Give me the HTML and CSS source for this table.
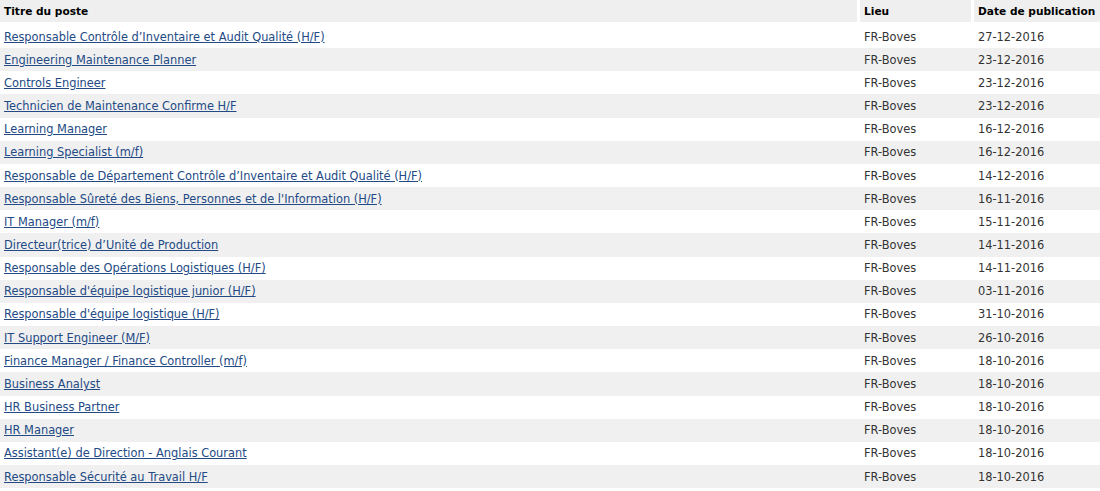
FILE: index.html
```html
<!DOCTYPE html>
<html lang="fr">
<head>
<meta charset="utf-8">
<title>Offres d'emploi</title>
<link rel="stylesheet" href="styles.css">
</head>
<body>
<table class="jobs">
  <colgroup>
    <col class="c-title">
    <col class="c-place">
    <col class="c-date">
  </colgroup>
  <thead>
    <tr>
      <th class="h-title">Titre du poste</th>
      <th class="h-side">Lieu</th>
      <th class="h-side">Date de publication</th>
    </tr>
  </thead>
  <tbody>
    <tr><td class="t"><a href="#">Responsable Contrôle d’Inventaire et Audit Qualité (H/F)</a></td><td class="s">FR-Boves</td><td class="s">27-12-2016</td></tr>
    <tr><td class="t"><a href="#">Engineering Maintenance Planner</a></td><td class="s">FR-Boves</td><td class="s">23-12-2016</td></tr>
    <tr><td class="t"><a href="#">Controls Engineer</a></td><td class="s">FR-Boves</td><td class="s">23-12-2016</td></tr>
    <tr><td class="t"><a href="#">Technicien de Maintenance Confirme H/F</a></td><td class="s">FR-Boves</td><td class="s">23-12-2016</td></tr>
    <tr><td class="t"><a href="#">Learning Manager</a></td><td class="s">FR-Boves</td><td class="s">16-12-2016</td></tr>
    <tr><td class="t"><a href="#">Learning Specialist (m/f)</a></td><td class="s">FR-Boves</td><td class="s">16-12-2016</td></tr>
    <tr><td class="t"><a href="#">Responsable de Département Contrôle d’Inventaire et Audit Qualité (H/F)</a></td><td class="s">FR-Boves</td><td class="s">14-12-2016</td></tr>
    <tr><td class="t"><a href="#">Responsable Sûreté des Biens, Personnes et de l'Information (H/F)</a></td><td class="s">FR-Boves</td><td class="s">16-11-2016</td></tr>
    <tr><td class="t"><a href="#">IT Manager (m/f)</a></td><td class="s">FR-Boves</td><td class="s">15-11-2016</td></tr>
    <tr><td class="t"><a href="#">Directeur(trice) d’Unité de Production</a></td><td class="s">FR-Boves</td><td class="s">14-11-2016</td></tr>
    <tr><td class="t"><a href="#">Responsable des Opérations Logistiques (H/F)</a></td><td class="s">FR-Boves</td><td class="s">14-11-2016</td></tr>
    <tr><td class="t"><a href="#">Responsable d'équipe logistique junior (H/F)</a></td><td class="s">FR-Boves</td><td class="s">03-11-2016</td></tr>
    <tr><td class="t"><a href="#">Responsable d'équipe logistique (H/F)</a></td><td class="s">FR-Boves</td><td class="s">31-10-2016</td></tr>
    <tr><td class="t"><a href="#">IT Support Engineer (M/F)</a></td><td class="s">FR-Boves</td><td class="s">26-10-2016</td></tr>
    <tr><td class="t"><a href="#">Finance Manager / Finance Controller (m/f)</a></td><td class="s">FR-Boves</td><td class="s">18-10-2016</td></tr>
    <tr><td class="t"><a href="#">Business Analyst</a></td><td class="s">FR-Boves</td><td class="s">18-10-2016</td></tr>
    <tr><td class="t"><a href="#">HR Business Partner</a></td><td class="s">FR-Boves</td><td class="s">18-10-2016</td></tr>
    <tr><td class="t"><a href="#">HR Manager</a></td><td class="s">FR-Boves</td><td class="s">18-10-2016</td></tr>
    <tr><td class="t"><a href="#">Assistant(e) de Direction - Anglais Courant</a></td><td class="s">FR-Boves</td><td class="s">18-10-2016</td></tr>
    <tr><td class="t"><a href="#">Responsable Sécurité au Travail H/F</a></td><td class="s">FR-Boves</td><td class="s">18-10-2016</td></tr>
  </tbody>
</table>
</body>
</html>
```

FILE: styles.css
```css
html, body {
  margin: 0;
  padding: 0;
  background: #ffffff;
}

body {
  font-family: "DejaVu Sans", Verdana, sans-serif;
  font-size: 11.4px;
  color: #333333;
}

.jobs {
  width: 1100px;
  table-layout: fixed;
  border-collapse: separate;
  border-spacing: 0;
}

.c-title { width: 857px; }
.c-place { width: 114px; }
.c-date { width: 129px; }

.jobs th {
  height: 25px;
  padding: 1px 0 2px 4px;
  background: #efefef;
  background-clip: padding-box;
  color: #000000;
  font-size: 10.6px;
  font-weight: bold;
  text-align: left;
  border-bottom: 3px solid #ffffff;
  box-sizing: border-box;
}

.jobs th.h-side {
  border-left: 3px solid #ffffff;
}

.jobs tbody tr {
  height: 23.16px;
}

.jobs tbody tr:nth-child(even) {
  background: #f0f0f0;
}

.jobs td {
  padding: 0;
  white-space: nowrap;
}

.jobs td.t {
  padding-left: 4px;
}

.jobs td.s {
  padding-left: 7px;
}

.jobs a {
  color: #234a85;
  text-decoration: underline;
}
```
